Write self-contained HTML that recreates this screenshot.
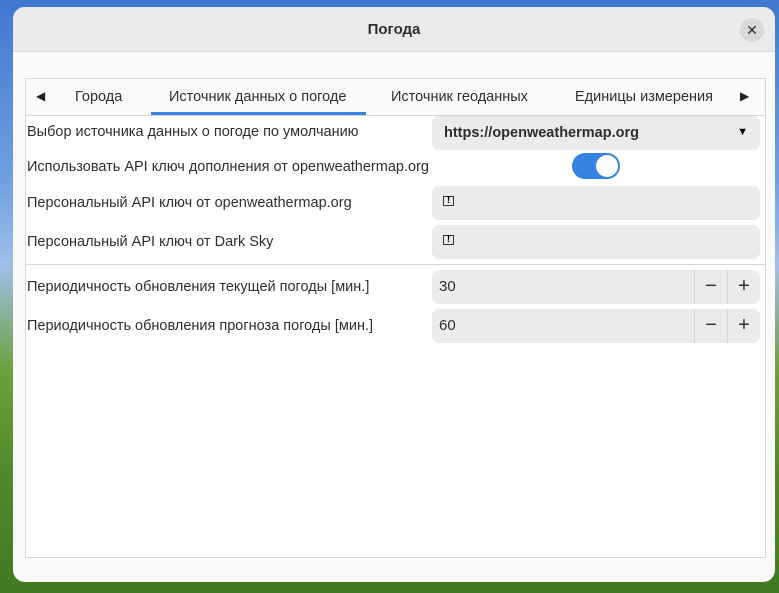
<!DOCTYPE html>
<html><head><meta charset="utf-8"><style>
*{margin:0;padding:0;box-sizing:border-box}
body{width:779px;height:593px;overflow:hidden;position:relative;font-family:"Liberation Sans","DejaVu Sans",sans-serif;
background:linear-gradient(180deg,#3f78d0 0%,#6f9fe0 30%,#9fc0e8 45%,#6fa040 62%,#4f8a2a 80%,#3f7a22 100%)}
.win{position:absolute;left:13px;top:7px;width:762px;height:575px;background:#fafafa;border-radius:12px;overflow:hidden}
.hdr{height:45px;background:#ebebeb;border-bottom:1px solid #d6d6d6;text-align:center;line-height:45px;font-weight:bold;font-size:15px;color:#2e2e2e}
.close{position:absolute;right:11px;top:11px;width:24px;height:24px;border-radius:50%;background:#d8d8d8;font-size:14px;line-height:24px;text-align:center;font-weight:bold;color:#2e2e2e}
.frame{position:absolute;left:12px;top:71px;width:741px;height:480px;border:1px solid #d6d6d6;background:#fff}
.tabs{height:37px;border-bottom:1px solid #d6d6d6;background:#fafafa;position:relative;font-size:14.5px;color:#2e2e2e}
.tabs span{position:absolute;top:10px}
.ul{position:absolute;left:125px;top:33px;width:215px;height:3px;background:#3584e4}
.row{position:absolute;left:0;font-size:14.5px;color:#2e2e2e}
.box{position:absolute;left:406px;width:328px;height:34px;background:#ebebeb;border-radius:7px}
.sw{position:absolute;left:546px;top:74px;width:48px;height:26px;border-radius:13px;background:#3584e4}
.sw i{position:absolute;right:2px;top:2px;width:22px;height:22px;border-radius:50%;background:#fff}
.btn{position:absolute;top:0;width:33px;height:34px;border-left:1px solid #d4d4d4;text-align:center;line-height:33px;font-size:20px;color:#2e2e2e}
.warn{position:absolute;left:11px;top:10px;font-size:10px;border:1.5px solid #333;width:11px;height:10px;line-height:8px;text-align:center;font-weight:bold}
</style></head><body>
<div class="win">
<div class="hdr">Погода</div><div class="close">✕</div>
<div class="frame">
<div class="tabs">
<span style="left:10px;font-size:12px;top:10px;color:#222">◀</span>
<span style="left:49px">Города</span>
<span style="left:143px">Источник данных о погоде</span>
<span style="left:365px">Источник геоданных</span>
<span style="left:549px">Единицы измерения</span>
<span style="left:714px;font-size:12px;top:10px;color:#222">▶</span>
<div class="ul"></div>
</div>
<div class="row" style="top:45px;left:1px">Выбор источника данных о погоде по умолчанию</div>
<div class="box" style="top:37px"><b style="position:absolute;left:12px;top:9px;font-size:14.5px;color:#2e2e2e">https://openweathermap.org</b><span style="position:absolute;right:12px;top:10px;font-size:11px">▼</span></div>
<div class="row" style="top:80px;left:1px">Использовать API ключ дополнения от openweathermap.org</div>
<div class="sw"><i></i></div>
<div class="row" style="top:116px;left:1px">Персональный API ключ от openweathermap.org</div>
<div class="box" style="top:107px"><span class="warn">!</span></div>
<div class="row" style="top:155px;left:1px">Персональный API ключ от Dark Sky</div>
<div class="box" style="top:146px"><span class="warn">!</span></div>
<div style="position:absolute;left:0;top:185px;width:739px;height:1px;background:#d6d6d6"></div>
<div class="row" style="top:200px;left:1px">Периодичность обновления текущей погоды [мин.]</div>
<div class="box" style="top:191px"><span style="position:absolute;left:7px;top:8px;font-size:15px;color:#2e2e2e">30</span><div class="btn" style="right:33px">−</div><div class="btn" style="right:0">+</div></div>
<div class="row" style="top:239px;left:1px">Периодичность обновления прогноза погоды [мин.]</div>
<div class="box" style="top:230px"><span style="position:absolute;left:7px;top:8px;font-size:15px;color:#2e2e2e">60</span><div class="btn" style="right:33px">−</div><div class="btn" style="right:0">+</div></div>
</div>
</div>
</body></html>
